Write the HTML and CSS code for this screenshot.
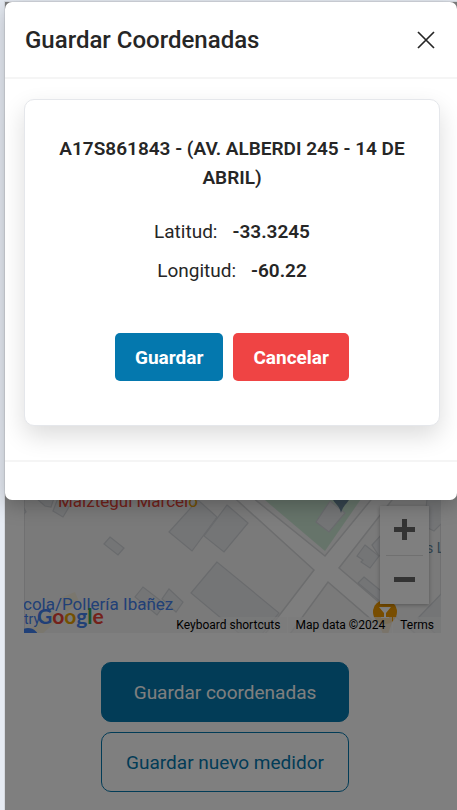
FILE: index.html
```html
<!DOCTYPE html>
<html lang="es">
<head>
<meta charset="utf-8">
<meta name="viewport" content="width=device-width, initial-scale=1">
<title>Guardar Coordenadas</title>
<link rel="stylesheet" href="styles.css">
</head>
<body>
<div class="screen">
  <main class="page">
    <div class="map">
      <svg class="map-art" viewBox="24 473 417 160" aria-hidden="true">
        <rect class="road" x="24" y="473" width="417" height="160"/>
        <g class="land">
          <path d="M24 473H207L314 570L265 634H24Z"/>
          <path d="M222 473L325 556L393 473Z"/>
          <path d="M441 473H413L339 568L416 634H441Z"/>
          <path d="M290 634L328 582L388 634Z"/>
        </g>
        <path class="park" d="M233 473L325 551L379 473Z"/>
        <g class="building">
          <path d="M110 537L124 548L118 555L104 544Z"/>
          <path d="M58 498L69 507L63 517L53 511Z"/>
          <path d="M36 498H54L51 507L45 506Z"/>
          <path d="M24 508L26 512L24 514Z"/>
          <path d="M198 500L169 532L192 551L217 517Z"/>
          <path d="M227 505L248 523L224 552L204 536Z"/>
          <path d="M217 562L191 593L240 634H262L279 613Z"/>
          <path d="M143 587L135 597L157 615L165 604Z"/>
          <path d="M169 589L183 602L176 612L162 599Z"/>
          <path d="M330 501L316 522L329 532L345 513Z"/>
          <path d="M365 545L379 556L370 568L361 562L363 560L357 556Z"/>
          <path d="M372 545L382 534V554L379 556Z"/>
          <path d="M364 577L386 595L382 603L358 583Z"/>
          <path d="M428 490H445V520L434 531L424 526Z"/>
          <path d="M442 593L418 618L436 634H442Z"/>
        </g>
        <path class="lane" d="M24 634L52 612L60 618L42 634Z"/>
        <path class="lane" d="M60 598L75 592L80 604L66 612Z"/>
        <path class="marker" d="M328 490H355Q349 501 345 505Q342 509 341 513Q340 508 337 505Q332 500 328 490Z"/>
        <text class="label red" x="58" y="507">Maiztegui Marcel<tspan class="amber">o</tspan></text>
        <text class="label blue" x="23" y="610">cola/Pollería Ibañez</text>
        <text class="label small blue" x="24" y="624">try</text>
        <text class="label small slate" x="426" y="553">s L</text>
        <circle class="pin-blue" cx="28" cy="639" r="11"/>
        <path class="pin-tail" d="M376 617L383 634H388L394 617Z"/>
        <circle class="pin" cx="385" cy="612" r="12"/>
        <path class="glass" d="M379 607H391L386 613V617H389V618H381V617H384V613Z"/>
        <text class="logo" x="37" y="624"><tspan class="blue">G</tspan><tspan class="red">o</tspan><tspan class="yellow">o</tspan><tspan class="blue">g</tspan><tspan class="green">l</tspan><tspan class="red">e</tspan></text>
      </svg>
      <div class="zoom">
        <button type="button" aria-label="Zoom in"><svg viewBox="0 0 21 21"><path d="M8 0h5v8h8v5h-8v8H8v-8H0V8h8z"/></svg></button>
        <button type="button" aria-label="Zoom out"><svg viewBox="0 0 21 21"><path d="M0 8h21v5H0z"/></svg></button>
      </div>
      <div class="credits">
        <a href="#">Keyboard shortcuts</a>
        <span>Map data ©2024</span>
        <a href="#">Terms</a>
      </div>
    </div>
    <div class="page-actions">
      <button type="button" class="wide solid">Guardar coordenadas</button>
      <button type="button" class="wide outline">Guardar nuevo medidor</button>
    </div>
  </main>
  <div class="backdrop"></div>
  <section class="dialog" role="dialog" aria-modal="true" aria-labelledby="dialog-title">
    <header class="dialog-head">
      <h1 id="dialog-title">Guardar Coordenadas</h1>
      <button type="button" class="close" aria-label="Cerrar"><svg viewBox="0 0 18 18"><path d="M1 1L17 17M17 1L1 17"/></svg></button>
    </header>
    <div class="dialog-body">
      <article class="card">
        <h2>A17S861843 - (AV. ALBERDI 245 - 14 DE ABRIL)</h2>
        <dl>
          <div><dt>Latitud:</dt><dd>-33.3245</dd></div>
          <div><dt>Longitud:</dt><dd>-60.22</dd></div>
        </dl>
        <div class="card-actions">
          <button type="button" class="save">Guardar</button>
          <button type="button" class="cancel">Cancelar</button>
        </div>
      </article>
    </div>
    <footer class="dialog-foot"></footer>
  </section>
</div>
</body>
</html>
```
FILE: styles.css
```css
* { box-sizing: border-box; }

body {
  margin: 0;
  padding: 2px 0 0 5px;
  background: #e6ebf3;
  color: #262626;
  font-family: Roboto, "Liberation Sans", sans-serif;
  font-size: 19px;
  line-height: 29px;
}

button {
  padding: 0;
  border: 0;
  font: inherit;
  cursor: pointer;
}

h1, h2, dl, dd { margin: 0; }

.screen {
  position: relative;
  min-height: calc(100vh - 2px);
  background: #fff;
  box-shadow: 0 0 0 1px #d5d9e0;
}

.page { padding: 231px 16px 18px 19px; }

.map {
  position: relative;
  display: flex;
  flex-direction: column;
  justify-content: flex-end;
  height: 400px;
  overflow: hidden;
  background: #f5f5f5;
}

.map-art { display: block; width: 100%; }

.road { fill: #fdfdfd; }
.land path { fill: #f4f4f4; stroke: #d9dadc; stroke-width: 1.5; }
.park { fill: #cde8d5; }
.building path { fill: #e8eaed; stroke: #d3d6da; stroke-width: 1.2; }
.lane { fill: #f5efdc; }
.marker { fill: #6c8a9e; }
.pin { fill: #f09a00; }
.pin-tail { fill: #f3c886; }
.pin-blue { fill: #4080f0; }
.glass { fill: #fff; }

.label { font-size: 17px; }
.small { font-size: 14px; }
.logo { font-family: Lato, sans-serif; font-size: 21px; font-weight: 700; }
.red { fill: #e94235; }
.amber, .yellow { fill: #e8a000; }
.blue { fill: #4280ee; }
.green { fill: #34a853; }
.slate { fill: #63889f; }

.zoom {
  position: absolute;
  right: 12px;
  bottom: 29px;
  display: grid;
  width: 49px;
  padding: 0 6px;
  background: #fff;
  box-shadow: 0 1px 4px rgba(0, 0, 0, .3);
}

.zoom button {
  display: grid;
  place-items: center;
  height: 49px;
  padding-bottom: 2px;
  background: none;
}

.zoom button + button { border-top: 1px solid #e0e0e0; }
.zoom svg { width: 21px; fill: #666; }

.credits {
  position: absolute;
  right: 0;
  bottom: 0;
  display: flex;
  gap: 1px;
  font-size: 12px;
  line-height: 16px;
}

.credits > * {
  padding: 0 7px;
  background: rgba(245, 245, 245, .7);
  color: #000;
  text-decoration: none;
}

.page-actions {
  display: grid;
  justify-content: center;
  gap: 10px;
  padding: 29px 15px 0 0;
}

.wide {
  width: 248px;
  height: 60px;
  border: 1px solid #0478ae;
  border-radius: 10px;
}

.solid { background: #0478ae; color: #fff; }
.outline { background: none; color: #0478ae; }

.backdrop {
  position: absolute;
  inset: 0;
  background: rgba(0, 0, 0, .5);
}

.dialog {
  position: absolute;
  top: 0;
  left: 0;
  right: 0;
  border-radius: 7px;
  background: #fff;
  box-shadow: 0 5px 20px rgba(0, 0, 0, .25);
}

.dialog-head {
  display: flex;
  align-items: center;
  justify-content: space-between;
  height: 77px;
  padding: 1px 22px 0 20px;
  border-bottom: 2px solid #f5f5f5;
}

.dialog-head h1 { font-size: 24px; font-weight: 500; }

.close {
  display: grid;
  place-items: center;
  background: none;
}

.close svg {
  width: 18px;
  fill: none;
  stroke: #262626;
  stroke-width: 1.7;
}

.dialog-body { padding: 20px 17px 34px 19px; }

.card {
  padding: 34px 28px 44px;
  border: 1px solid #e5e7eb;
  border-radius: 10px;
  background: #fff;
  box-shadow: 0 10px 24px rgba(0, 0, 0, .14);
  text-align: center;
}

.card h2 { font-size: 19px; font-weight: 600; }

.card dl {
  display: grid;
  gap: 10px;
  padding: 25px 0 48px;
}

.card dl div {
  display: flex;
  justify-content: center;
  gap: 15px;
}

.card dd { font-weight: 600; }

.card-actions {
  display: flex;
  justify-content: center;
  gap: 10px;
}

.card-actions button {
  height: 48px;
  padding: 0 20px;
  border-radius: 5px;
  color: #fff;
  font-weight: 700;
}

.card-actions .save { background: #0478ae; }
.card-actions .cancel { background: #ef4444; }

.dialog-foot { height: 40px; border-top: 2px solid #f5f5f5; }
```
